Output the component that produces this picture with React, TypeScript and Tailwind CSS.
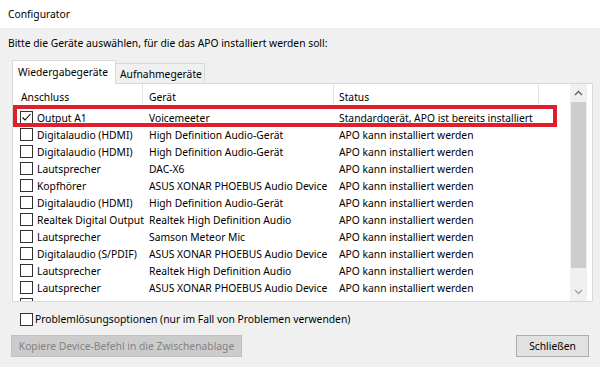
import React from "react";

const rows: [string, string, string, boolean][] = [
  ["Output A1", "Voicemeeter", "Standardgerät, APO ist bereits installiert", true],
  ["Digitalaudio (HDMI)", "High Definition Audio-Gerät", "APO kann installiert werden", false],
  ["Digitalaudio (HDMI)", "High Definition Audio-Gerät", "APO kann installiert werden", false],
  ["Lautsprecher", "DAC-X6", "APO kann installiert werden", false],
  ["Kopfhörer", "ASUS XONAR PHOEBUS Audio Device", "APO kann installiert werden", false],
  ["Digitalaudio (HDMI)", "High Definition Audio-Gerät", "APO kann installiert werden", false],
  ["Realtek Digital Output", "Realtek High Definition Audio", "APO kann installiert werden", false],
  ["Lautsprecher", "Samson Meteor Mic", "APO kann installiert werden", false],
  ["Digitalaudio (S/PDIF)", "ASUS XONAR PHOEBUS Audio Device", "APO kann installiert werden", false],
  ["Lautsprecher", "Realtek High Definition Audio", "APO kann installiert werden", false],
  ["Lautsprecher", "ASUS XONAR PHOEBUS Audio Device", "APO kann installiert werden", false],
];

function Check({ checked }: { checked: boolean }) {
  return (
    <div className="w-[13px] h-[13px] shrink-0 border border-[#333333] bg-white flex items-center justify-center">
      {checked && (
        <svg width="11" height="11" viewBox="0 0 11 11">
          <path d="M1.5 5.5 L4 8 L9.5 2" fill="none" stroke="#000" strokeWidth="1.1" />
        </svg>
      )}
    </div>
  );
}

export default function App() {
  return (
    <div
      className="relative w-[600px] h-[367px] overflow-hidden bg-[#f0f0f0] text-[10.3px] text-black leading-[14px] whitespace-nowrap"
      style={{ fontFamily: '"Noto Sans", "DejaVu Sans", sans-serif' }}
    >
      <div className="h-[28px] bg-white flex items-center pl-[8px]">Configurator</div>
      <div className="pl-[8px] mt-[7px] h-[16px] flex items-center">
        Bitte die Geräte auswählen, für die das APO installiert werden soll:
      </div>
      {/* Tabs */}
      <div className="flex items-end pl-[12px] mt-[9px] h-[23px] relative z-10">
        <div className="h-[24px] w-[104px] -mb-[1px] bg-white border border-[#d9d9d9] border-b-0 flex items-center pl-[5px] pb-[2px]">
          Wiedergabegeräte
        </div>
        <div className="h-[20px] w-[89px] bg-[#f0f0f0] border border-[#d9d9d9] border-l-0 border-b-0 flex items-center pl-[4px]">
          Aufnahmegeräte
        </div>
      </div>
      {/* List */}
      <div className="ml-[12px] w-[581px] h-[219px] border border-[#d9d9d9] bg-white flex overflow-hidden">
        <div className="w-[557px] flex flex-col">
          <div className="h-[25px] flex shrink-0">
            <div className="w-[130px] pl-[8px] flex items-center border-r border-[#e5e5e5]">Anschluss</div>
            <div className="w-[191px] pl-[6px] flex items-center border-r border-[#e5e5e5]">Gerät</div>
            <div className="w-[205px] pl-[5px] flex items-center border-r border-[#e5e5e5]">Status</div>
            <div className="flex-1" />
          </div>
          {rows.map((r, i) => (
            <div key={i} className="h-[17px] flex shrink-0 items-center">
              <div className="w-[130px] flex items-center pl-[7px] gap-[4px]">
                <Check checked={r[3]} />
                <span>{r[0]}</span>
              </div>
              <div className="w-[191px] pl-[6px]">{r[1]}</div>
              <div className="w-[205px] pl-[5px]">{r[2]}</div>
            </div>
          ))}
          <div className="h-[17px] flex shrink-0 pt-[2px] pl-[7px]">
            <Check checked={false} />
          </div>
        </div>
        {/* Scrollbar */}
        <div className="w-[17px] bg-[#f0f0f0] flex flex-col">
          <div className="h-[18px] flex items-center justify-center">
            <svg width="9" height="6" viewBox="0 0 9 6">
              <path d="M1 5 L4.5 1.5 L8 5" fill="none" stroke="#606060" strokeWidth="1.3" />
            </svg>
          </div>
          <div className="mx-[1px] h-[166px] bg-[#cdcdcd]" />
          <div className="flex-1" />
          <div className="h-[18px] flex items-center justify-center">
            <svg width="9" height="6" viewBox="0 0 9 6">
              <path d="M1 1 L4.5 4.5 L8 1" fill="none" stroke="#a0a0a0" strokeWidth="1.3" />
            </svg>
          </div>
        </div>
        <div className="flex-1" />
      </div>
      {/* Bottom checkbox */}
      <div className="flex items-center pl-[20px] mt-[10px] h-[14px] gap-[2px]">
        <Check checked={false} />
        <span>Problemlösungsoptionen (nur im Fall von Problemen verwenden)</span>
      </div>
      {/* Buttons */}
      <div className="flex justify-between pl-[11px] pr-[11px] mt-[9px]">
        <div className="w-[231px] h-[22px] bg-[#cccccc] border border-[#bfbfbf] text-[#838383] flex items-center justify-center">
          Kopiere Device-Befehl in die Zwischenablage
        </div>
        <div className="w-[73px] h-[22px] bg-[#e1e1e1] border border-[#adadad] flex items-center justify-center">
          Schließen
        </div>
      </div>
      {/* Red annotation box */}
      <div className="absolute left-[13px] top-[105px] w-[544px] h-[22px] border-4 border-[#e01f2d]" />
    </div>
  );
}
